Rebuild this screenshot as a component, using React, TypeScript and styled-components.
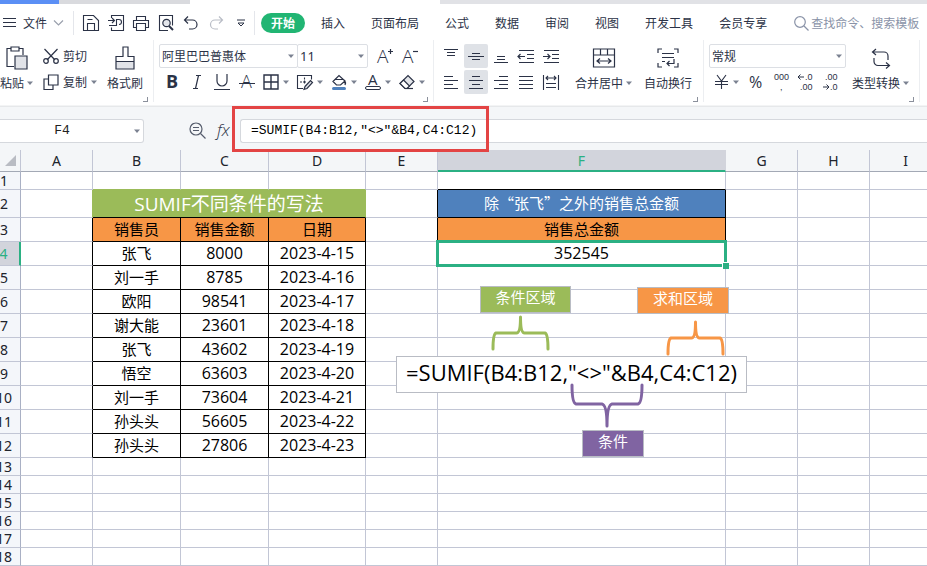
import React from 'react';
import styled, { createGlobalStyle, css } from 'styled-components';

const UI = '"Noto Sans CJK SC", "Noto Sans", sans-serif';
const CELL = '"Open Sans", "Noto Sans CJK SC", sans-serif';
const INK = '#2b3246';
const GREEN = '#2bb083';
const LINE = '#c2c6d5';

const GlobalStyle = createGlobalStyle`
  * { box-sizing: border-box; }
  body { margin: 0; background: #fff; overflow: hidden; }
  button, input, select { font: inherit; color: inherit; margin: 0; }
`;

const Page = styled.div`
  font-family: ${UI};
  font-size: 12px;
  line-height: 18px;
  color: ${INK};
  background: #fff;
  overflow: hidden;
`;

/* ---------- window tabs ---------- */
const TabStrip = styled.div`
  display: flex;
  height: 4px;
`;
const WindowTab = styled.div<{ $tone: string; $width?: number }>`
  background: ${p => p.$tone};
  ${p => (p.$width ? css`flex: 0 0 ${p.$width}px;` : css`flex: 1;`)}
`;

/* ---------- menu bar ---------- */
const MenuBar = styled.header`
  display: flex;
  align-items: center;
  height: 36px;
  padding-top: 2px;
  white-space: nowrap;
`;
const PlainButton = styled.button`
  display: inline-flex;
  align-items: center;
  justify-content: center;
  flex: none;
  padding: 0;
  border: 0;
  background: none;
  white-space: nowrap;
`;
const FileButton = styled(PlainButton)`
  gap: 7px;
  width: 73px;
  padding-left: 3px;
  justify-content: flex-start;
`;
const MenuDivider = styled.span`
  flex: none;
  width: 1px;
  height: 24px;
  background: #e4e6eb;
`;
const QuickTools = styled.div`
  display: flex;
  padding: 0 1px 0 4px;
`;
const QuickButton = styled(PlainButton)`
  width: 25px;
  height: 24px;
`;
const TabList = styled.nav`
  display: flex;
  align-items: center;
  padding-left: 4px;
`;
const MenuTab = styled(PlainButton)<{ $active?: boolean }>`
  height: 20px;
  padding: 0 13px;
  ${p => p.$active && css`
    margin: 0 3px 0 2px;
    padding: 0 10px;
    border-radius: 10px;
    background: #21b573;
    color: #fff;
    font-weight: 700;
  `}
`;
const Search = styled.label`
  display: flex;
  align-items: center;
  gap: 2px;
  flex: 1;
  min-width: 0;
  padding-left: 14px;
  color: #8a93a8;
`;
const SearchInput = styled.input`
  flex: 1;
  min-width: 0;
  padding: 0;
  border: 0;
  outline: 0;
  background: none;
  &::placeholder { color: #8a93a8; opacity: 1; }
`;

/* ---------- ribbon ---------- */
const Ribbon = styled.section`
  display: flex;
  height: 66px;
  border-bottom: 1px solid #f3f4f5;
`;
const Group = styled.div<{ $gap: number; $pad: string }>`
  position: relative;
  display: flex;
  flex: none;
  gap: ${p => p.$gap}px;
  padding: ${p => p.$pad};
  height: 62px;
  border-right: 1px solid #eceef1;
`;
const Corner = styled.span`
  position: absolute;
  right: 5px;
  bottom: 0;
  width: 5px;
  height: 5px;
  border: solid #8b909c;
  border-width: 0 1px 1px 0;
`;
const BigButton = styled(PlainButton)`
  flex-direction: column;
  height: 50px;
`;
const BigIcon = styled.span`
  display: flex;
  align-items: center;
  height: 28px;
`;
const Caption = styled.span`
  display: flex;
  align-items: center;
  gap: 3px;
  height: 22px;
`;
const Stack = styled.div`
  display: flex;
  flex-direction: column;
  gap: 2px;
`;
const Row = styled.div`
  display: flex;
  align-items: center;
  height: 24px;
`;
const SmallButton = styled(PlainButton)`
  justify-content: flex-start;
  gap: 4px;
  height: 24px;
`;
const ToolButton = styled(PlainButton)`
  width: 25px;
  height: 24px;
`;
const SplitButton = styled(PlainButton)`
  justify-content: flex-start;
  gap: 4px;
  width: 34px;
  height: 24px;
  padding-left: 4px;
`;
const AlignGrid = styled.div`
  display: grid;
  grid-template-columns: repeat(5, 24px);
  grid-auto-rows: 24px;
  align-content: start;
  gap: 2px 1px;
`;
const AlignButton = styled(PlainButton)<{ $on?: boolean }>`
  width: 24px;
  height: 24px;
  border-radius: 2px;
  background: ${p => (p.$on ? '#dfe2e7' : 'none')};
`;
const Combo = styled.span<{ $width: number }>`
  position: relative;
  display: flex;
  align-items: center;
  justify-content: flex-end;
  width: ${p => p.$width}px;
  height: 24px;
  padding-right: 3px;
  border: 1px solid #dcdfe4;
  border-radius: 2px;
  & + & { margin-left: -1px; }
`;
const ComboSelect = styled.select<{ $latin?: boolean }>`
  position: absolute;
  inset: 0;
  width: 100%;
  padding: 0 2px;
  border: 0;
  background: none;
  appearance: none;
  ${p => p.$latin && css`font: 13px "Noto Sans", sans-serif;`}
`;
const FontSizers = styled.span`
  display: flex;
  padding-left: 4px;
`;

/* ---------- formula bar ---------- */
const FormulaBar = styled.section`
  position: relative;
  display: flex;
  align-items: center;
  height: 44px;
  padding: 4px 0 0;
  background: #f4f6f8;
  border-top: 1px solid #e6e8ea;
`;
const NameBox = styled.span`
  display: flex;
  align-items: center;
  flex: none;
  width: 144px;
  height: 24px;
  padding-right: 3px;
  border: 1px solid #d5d8dd;
  border-left: 0;
  border-radius: 0 3px 3px 0;
  background: #fff;
`;
const NameInput = styled.input`
  flex: 1;
  min-width: 0;
  padding: 0 10px 0 0;
  border: 0;
  outline: 0;
  background: none;
  text-align: center;
  font: 13px "Liberation Mono", monospace;
  color: #222;
`;
const FormulaTools = styled.div`
  display: flex;
  align-items: center;
  gap: 10px;
  width: 96px;
  padding-left: 45px;
`;
const FormulaInput = styled.input`
  flex: 1;
  min-width: 0;
  height: 24px;
  padding: 0 10px;
  border: 1px solid #d5d8dd;
  border-right: 0;
  border-radius: 3px 0 0 3px;
  outline: 0;
  background: #fff;
  font: 13px "Liberation Mono", monospace;
  color: #000;
`;
const Highlight = styled.span`
  position: absolute;
  z-index: 3;
  left: 232px;
  top: -1px;
  width: 257px;
  height: 46px;
  border: 3px solid #e34444;
  pointer-events: none;
`;

/* ---------- sheet ---------- */
const Sheet = styled.main`
  position: relative;
`;
const Grid = styled.table`
  table-layout: fixed;
  width: 954px;
  margin-left: -12px;
  border-collapse: separate;
  border-spacing: 0;
  font-family: ${CELL};
  color: #000;
`;
const Col = styled.col<{ $width: number }>`
  width: ${p => p.$width}px;
`;
const Line = styled.tr<{ $height: number }>`
  height: ${p => p.$height}px;
`;
const ColHead = styled.th<{ $on?: boolean }>`
  padding: 0;
  border-right: 1px solid ${p => (p.$on ? '#d2d4dc' : LINE)};
  border-bottom: 1px solid #a3a9b5;
  background: #f4f6f8;
  font: 14px/20px "Noto Sans", sans-serif;
  color: #20232c;
  ${p => p.$on && css`
    border-bottom: 2px solid ${GREEN};
    background: #d2d4dc;
    color: ${GREEN};
    line-height: 19px;
  `}
`;
const SelectAll = styled(ColHead)`
  padding-left: 17px;
  text-align: left;
  line-height: 0;
`;
const RowHead = styled.th<{ $on?: boolean }>`
  padding: 0;
  border-right: 1px solid #a9b0c4;
  border-bottom: 1px solid ${LINE};
  background: #f4f6fa;
  font: 14px/16px "Noto Sans", sans-serif;
  color: #20232c;
  ${p => p.$on && css`
    border-right: 2px solid ${GREEN};
    background: #d2d4dc;
    color: ${GREEN};
  `}
`;
type Tone = 'plain' | 'title' | 'head' | 'blue' | 'data';
const tones = {
  plain: css``,
  title: css`
    background: #9bbb59;
    border-color: #9bbb59;
    border-bottom-color: #000;
    color: #fff;
    font-size: 19px;
  `,
  head: css`padding-bottom: 2px; background: #f79646; border-color: #000;`,
  blue: css`
    padding-bottom: 2px;
    background: #4f81bd;
    border-color: #000;
    color: #fff;
    font-family: "Noto Sans CJK SC", sans-serif;
  `,
  data: css`padding-bottom: 2px; border-color: #000;`,
};
const Cell = styled.td<{ $tone: Tone; $number?: boolean; $right?: string; $bottom?: string }>`
  position: relative;
  padding: 0;
  border: solid ${LINE};
  border-width: 0 1px 1px 0;
  font-size: ${p => (p.$number ? 16 : 15)}px;
  line-height: 16px;
  text-align: center;
  white-space: nowrap;
  ${p => tones[p.$tone]}
  ${p => p.$number && css`padding-bottom: 2px;`}
  ${p => p.$right && css`border-right-color: ${p.$right};`}
  ${p => p.$bottom && css`border-bottom-color: ${p.$bottom};`}
`;
const Selection = styled.span`
  position: absolute;
  z-index: 1;
  inset: -2px;
  border: 3px solid ${GREEN};
  &::after {
    content: '';
    position: absolute;
    right: -5px;
    bottom: -5px;
    width: 6px;
    height: 6px;
    border: solid #fff;
    border-width: 1px 0 0 1px;
    background: ${GREEN};
  }
`;

/* ---------- annotation shapes floating over the sheet ---------- */
const Note = styled.div<{ $x: number; $y: number; $w: number; $tone: string }>`
  position: absolute;
  left: ${p => p.$x}px;
  top: ${p => p.$y}px;
  width: ${p => p.$w}px;
  height: 27px;
  border: 1px solid #b9bcc4;
  background: ${p => p.$tone};
  color: #fff;
  font-size: 15px;
  line-height: 19px;
  text-align: center;
`;
const FormulaNote = styled.div`
  position: absolute;
  left: 396px;
  top: 206px;
  width: 351px;
  height: 37px;
  border: 1px solid #b9bcc4;
  background: #fff;
  font: 22px/30px ${CELL};
  color: #000;
  text-align: center;
  white-space: nowrap;
`;
const BraceSvg = styled.svg<{ $x: number; $y: number }>`
  position: absolute;
  left: ${p => p.$x}px;
  top: ${p => p.$y}px;
  fill: none;
  stroke-width: 3;
  stroke-linecap: round;
  stroke-linejoin: round;
`;

/* ---------- icons ---------- */
const Svg = styled.svg`
  flex: none;
  display: block;
  overflow: visible;
  fill: none;
  stroke: currentColor;
  stroke-width: 1.2;
  & text { fill: currentColor; stroke: none; font-family: "Open Sans", sans-serif; }
`;
const Digits = styled.g`
  && text { font: 9px "Liberation Sans", sans-serif; }
`;
const Icon = ({ w = 16, h = 16, children }: { w?: number; h?: number; children: React.ReactNode }) => (
  <Svg width={w} height={h} viewBox={`0 0 ${w} ${h}`} aria-hidden="true">{children}</Svg>
);
const Caret = () => (
  <Icon w={6} h={4}><path d="M0 0.5h6L3 4z" fill="#7b8291" stroke="none" /></Icon>
);

const quick: [string, React.ReactNode][] = [
  ['保存', <Icon><path d="M.500 15.500V.500h10l5 5v10zM4.500 15.500V8.500h7v7M4.500 4.500h5" strokeWidth="1.100" /></Icon>],
  ['输出', <Icon><path d="M3.500 3V.500h12v15h-12v-3M0 5.500h6M4 3l2.500 2.500L4 8M1 10.500h7.500V4.500h2.500a2.500 2.500 0 0 1 0 5" strokeWidth="1.100" /></Icon>],
  ['打印', <Icon><path d="M3.500 5V1.500h9V5M3.500 12.500H.500V5.500h15v7h-3M3.500 8.500h9v7h-9z" strokeWidth="1.100" /></Icon>],
  ['预览', <Icon><path d="M10 15.500H1.500V.500h13v10" strokeWidth="1.100" /><circle cx="8.500" cy="8" r="3.700" fill="#e3e5ea" /><path d="M11 11l4 4" strokeWidth="2" /></Icon>],
  ['撤销', <Icon><path d="M5 1.500L1.500 5L5 8.500M1.500 5h8a4.500 4.500 0 0 1 0 9H6" /></Icon>],
];

const lines = (rows: [number, number, number][], extra?: React.ReactNode) => (
  <Icon><path d={rows.map(([y, a, b]) => `M${a} ${y}H${b}`).join('')} strokeWidth="1.100" />{extra}</Icon>
);
const aligns: [string, boolean, React.ReactNode][] = [
  ['顶端对齐', false, lines([[1.5, 1, 15], [4.5, 4, 12], [7.5, 4, 12]])],
  ['垂直居中', true, lines([[5.5, 4, 12], [8.5, 0, 16], [11.5, 4, 12]])],
  ['底端对齐', false, lines([[8.5, 4, 12], [11.5, 4, 12], [14.5, 1, 15]])],
  ['减少缩进', false, lines([[2.5, 1, 16], [6.5, 9, 16], [10.5, 9, 16], [14.5, 1, 16]], <path d="M0 8.500h7M2.500 6L0 8.500L2.500 11" />)],
  ['增加缩进', false, lines([[2.5, 1, 16], [6.5, 9, 16], [10.5, 9, 16], [14.5, 1, 16]], <path d="M0 8.500h7M4.500 6L7 8.500L4.500 11" />)],
  ['左对齐', false, lines([[2.5, 1, 10], [6.5, 1, 15], [10.5, 1, 10], [14.5, 1, 15]])],
  ['水平居中', true, lines([[2.5, 4, 12], [6.5, 1, 15], [10.5, 4, 12], [14.5, 1, 15]])],
  ['右对齐', false, lines([[2.5, 6, 15], [6.5, 1, 15], [10.5, 6, 15], [14.5, 1, 15]])],
  ['两端对齐', false, lines([[2.5, 1, 15], [6.5, 1, 15], [10.5, 1, 15], [14.5, 1, 15]])],
  ['分散对齐', false, lines([[9.5, 3, 13], [13.5, 3, 13]], <path d="M.500 1v15M15.500 1v15M3 4h10M5 2l-2 2l2 2M11 2l2 2l-2 2" strokeWidth="1.100" />)],
];

const splits: [string, React.ReactNode][] = [
  ['边框', <Icon><path d="M1 1h14v14H1zM8 1v14M1 8h14" strokeWidth="1.400" /></Icon>],
  ['绘图边框', <Icon><path d="M6 14.500H.500V1.500h14v4M3 8h2M6 8h3M7.500 3.500v2M7.500 6.500v3" strokeWidth="1.100" /><path d="M8 12.500l5.500-6l2 2l-5.500 6l-3 .800z" fill="#dfe2e7" /></Icon>],
  ['填充颜色', <Icon><path d="M2 7.500L8 1.500L14 7L9.500 11H5.500zM4 5.500h8.500M13.500 6c1 1.500 1.500 3 .500 5" /><rect x="1" y="13" width="14" height="3" rx="1.500" fill="#4f81bd" stroke="none" /></Icon>],
  ['字体颜色', <Icon><text x="3" y="11" fontSize="15">A</text><rect x=".500" y="12.500" width="15" height="3" rx="1.500" strokeWidth="1" /></Icon>],
  ['清除', <Icon><path d="M1 9.500L9 1.500l6 6l-7 7H6z" fill="#e3e5ea" /><path d="M4.500 6L10.500 12l-2.500 2.500H6L1 9.500z" fill="#fff" /><path d="M6 14.500h8" /></Icon>],
];

const brace = (w: number) => {
  const m = w / 2;
  return `M2 34Q2 19 5 18H${m - 4}Q${m} 18 ${m} 2Q${m} 18 ${m + 4} 18H${w - 5}Q${w - 2} 19 ${w - 2} 34`;
};

/* ---------- data ---------- */
const columns = ['A', 'B', 'C', 'D', 'E', 'F', 'G', 'H', 'I'];
const widths = [33, 72, 88, 88, 97, 72, 288, 72, 72, 72];
const sales = [
  ['张飞', '8000', '2023-4-15'],
  ['刘一手', '8785', '2023-4-16'],
  ['欧阳', '98541', '2023-4-17'],
  ['谢大能', '23601', '2023-4-18'],
  ['张飞', '43602', '2023-4-19'],
  ['悟空', '63603', '2023-4-20'],
  ['刘一手', '73604', '2023-4-21'],
  ['孙头头', '56605', '2023-4-22'],
  ['孙头头', '27806', '2023-4-23'],
];
const tail = [13, 14, 15, 16, 17, 18];
const blanks = (n: number) => Array.from({ length: n }, (_, i) => <Cell key={`b${i}`} $tone="plain" />);

const Top = () => (
  <>
    <TabStrip>
      <WindowTab $tone="#5b8ff5" $width={59} />
      <WindowTab $tone="#d9dade" $width={131} />
      <WindowTab $tone="#ffffff" $width={250} />
      <WindowTab $tone="#e1e2e6" />
    </TabStrip>
    <MenuBar>
      <FileButton>
        <Icon w={13} h={12}><path d="M0 1.500h13M0 5.500h13M0 9.500h13" /></Icon>
        文件
        <Icon w={9} h={6}><path d="M0 .500L4.500 5L9 .500" stroke="#9aa0ad" /></Icon>
      </FileButton>
      <MenuDivider />
      <QuickTools>
        {quick.map(([name, icon]) => <QuickButton key={name} aria-label={name}>{icon}</QuickButton>)}
        <QuickButton aria-label="恢复">
          <Icon><path d="M11 1.500L14.500 5L11 8.500M14.500 5H7a4.500 4.500 0 0 0 0 9h3" stroke="#b9bdc6" /></Icon>
        </QuickButton>
        <QuickButton aria-label="自定义">
          <Icon w={8} h={8}><path d="M0 1h8M1 4h6L4 7z" strokeWidth="1" /></Icon>
        </QuickButton>
      </QuickTools>
      <MenuDivider />
      <TabList>
        <MenuTab $active>开始</MenuTab>
        {['插入', '页面布局', '公式', '数据', '审阅', '视图', '开发工具', '会员专享'].map(t => (
          <MenuTab key={t}>{t}</MenuTab>
        ))}
      </TabList>
      <Search>
        <Icon w={15} h={15}><circle cx="6" cy="6" r="5.300" /><path d="M10 10l4.500 4.500" /></Icon>
        <SearchInput aria-label="查找命令" placeholder="查找命令、搜索模板" />
      </Search>
    </MenuBar>
  </>
);

const RibbonBar = () => (
  <Ribbon>
    <Group $gap={10} $pad="4px 10px 0 0">
      <BigButton>
        <BigIcon>
          <Icon w={22} h={24}>
            <path d="M8 20.500H1V2.500h4M13 2.500h4V9M5 1h8v4H5z" />
            <path d="M9 10h12v13H9z" fill="#e1e3e8" />
          </Icon>
        </BigIcon>
        <Caption>粘贴<Caret /></Caption>
      </BigButton>
      <Stack>
        <SmallButton>
          <Icon><path d="M1.500 1L12 12M14.500 1L4 12" /><circle cx="3" cy="13" r="2.300" /><circle cx="13" cy="13" r="2.300" /></Icon>
          剪切
        </SmallButton>
        <SmallButton>
          <Icon><path d="M5.500 1h9.500v10H5.500zM5.500 5H1v10.500h9V11" /></Icon>
          复制<Caret />
        </SmallButton>
      </Stack>
      <BigButton>
        <BigIcon>
          <Icon w={20} h={24}>
            <path d="M1 16h18v7H1z" fill="#e1e3e8" stroke="none" />
            <path d="M8 1h5v9.500h6V23H1V10.500h7zM1 15.500h18" />
          </Icon>
        </BigIcon>
        <Caption>格式刷</Caption>
      </BigButton>
      <Corner />
    </Group>

    <Group $gap={0} $pad="4px 4px 0 5px">
      <Stack>
        <Row>
          <Combo $width={139}>
            <ComboSelect aria-label="字体"><option>阿里巴巴普惠体</option></ComboSelect>
            <Caret />
          </Combo>
          <Combo $width={71}>
            <ComboSelect aria-label="字号" $latin><option>11</option></ComboSelect>
            <Caret />
          </Combo>
          <FontSizers>
            <ToolButton aria-label="增大字号"><Icon><text x="0" y="15" fontSize="19" fontWeight="300">A</text><path d="M11 3.500h5M13.500 1v5" /></Icon></ToolButton>
            <ToolButton aria-label="减小字号"><Icon><text x="0" y="15" fontSize="19" fontWeight="300">A</text><path d="M11 3.500h5" /></Icon></ToolButton>
          </FontSizers>
        </Row>
        <Row>
          <ToolButton aria-label="加粗"><Icon><text x="2" y="14" fontSize="18" fontWeight="700">B</text></Icon></ToolButton>
          <ToolButton aria-label="倾斜"><Icon><path d="M7 1.500h5M4 14.500h5M9.500 1.500L6.500 14.500" /></Icon></ToolButton>
          <ToolButton aria-label="下划线"><Icon><path d="M3 0v7a5 5 0 0 0 10 0V0M0 15.500h16" /></Icon></ToolButton>
          <ToolButton aria-label="删除线"><Icon><text x="2" y="14" fontSize="18" fontWeight="300">A</text><path d="M0 9.500h16" strokeWidth="1" /></Icon></ToolButton>
          {splits.map(([name, icon]) => (
            <SplitButton key={name} aria-label={name}>{icon}<Caret /></SplitButton>
          ))}
        </Row>
      </Stack>
      <Corner />
    </Group>

    <Group $gap={12} $pad="4px 11px 0 5px">
      <AlignGrid>
        {aligns.map(([name, on, icon]) => <AlignButton key={name} $on={on} aria-label={name}>{icon}</AlignButton>)}
      </AlignGrid>
      <BigButton>
        <BigIcon>
          <Icon w={22} h={20}><path d="M.500 1h21v18H.500zM.500 7h21M7.500 1v6M14.500 1v6M4 13h14M7 10.500L4 13l3 2.500M15 10.500L18 13l-3 2.500" /></Icon>
        </BigIcon>
        <Caption>合并居中<Caret /></Caption>
      </BigButton>
      <BigButton>
        <BigIcon>
          <Icon w={22} h={20}><path d="M5 1H1v4M17 1h4v4M5 19H1v-4M17 19h4v-4M5 5.500h12M5 9.500h12M5 13.500h3M17 11v4.500h-7M12.500 13L10 15.500l2.500 2.500" /></Icon>
        </BigIcon>
        <Caption>自动换行</Caption>
      </BigButton>
      <Corner />
    </Group>

    <Group $gap={6} $pad="4px 10px 0 5px">
      <Stack>
        <Row>
          <Combo $width={137}>
            <ComboSelect aria-label="数字格式"><option>常规</option></ComboSelect>
            <Caret />
          </Combo>
        </Row>
        <Row>
          <SplitButton aria-label="货币">
            <Icon><path d="M4 1l4.500 6L13 1M2 7.500h13M2 10.500h13M8.500 7v8" strokeWidth="1.100" /></Icon><Caret />
          </SplitButton>
          <ToolButton aria-label="百分比"><Icon><text x="1" y="14" fontSize="16">%</text></Icon></ToolButton>
          <ToolButton aria-label="千位分隔"><Icon w={18} h={18}><Digits><text x="2" y="7">000</text><text x="8" y="17">,</text></Digits></Icon></ToolButton>
          <ToolButton aria-label="增加小数位"><Icon w={18} h={18}><Digits><text x="8" y="7">.0</text><text x="3" y="17">.00</text></Digits><path d="M1 4h6M3.500 1.500L1 4L3.500 6.500" strokeWidth="1" /></Icon></ToolButton>
          <ToolButton aria-label="减少小数位"><Icon w={18} h={18}><Digits><text x="3" y="7">.00</text><text x="8" y="17">.0</text></Digits><path d="M1 14h6M4.500 11.500L7 14L4.500 16.500" strokeWidth="1" /></Icon></ToolButton>
        </Row>
      </Stack>
      <BigButton>
        <BigIcon>
          <Icon w={20} h={20}><path d="M5 1L1.500 4L5 7M1.500 4H13a4 4 0 0 1 4 4v4M15 14.500L18.500 17.500L15 20.500M18.500 17.500H7a4 4 0 0 1-4-4V10" /></Icon>
        </BigIcon>
        <Caption>类型转换<Caret /></Caption>
      </BigButton>
      <Corner />
    </Group>
  </Ribbon>
);

const Formula = () => (
  <FormulaBar>
    <NameBox>
      <NameInput aria-label="名称框" defaultValue="F4" />
      <Caret />
    </NameBox>
    <FormulaTools>
      <PlainButton aria-label="缩放">
        <Icon w={17} h={17}><circle cx="7" cy="7" r="6" stroke="#555c6c" /><path d="M4 5.500h6M4 8.500h6M11.500 11.500l5 5" stroke="#555c6c" /></Icon>
      </PlainButton>
      <PlainButton aria-label="插入函数">
        <Svg width="16" height="18" viewBox="0 0 16 18" aria-hidden="true">
          <text x="1" y="14" fontSize="17" fontStyle="italic" fontWeight="300">fx</text>
        </Svg>
      </PlainButton>
    </FormulaTools>
    <FormulaInput aria-label="编辑栏" defaultValue={'=SUMIF(B4:B12,"<>"&B4,C4:C12)'} />
    <Highlight />
  </FormulaBar>
);

const Worksheet = () => (
  <Sheet>
    <Grid>
      <colgroup>{widths.map((w, i) => <Col key={i} $width={w} />)}</colgroup>
      <thead>
        <Line $height={22}>
          <SelectAll><Icon w={11} h={11}><path d="M11 0v11H0z" fill="#b9bcc3" stroke="none" /></Icon></SelectAll>
          {columns.map(c => <ColHead key={c} scope="col" $on={c === 'F'}>{c}</ColHead>)}
        </Line>
      </thead>
      <tbody>
        <Line $height={18}>
          <RowHead scope="row">1</RowHead>
          {blanks(1)}
          <Cell $tone="plain" $bottom="#9bbb59" />
          <Cell $tone="plain" $bottom="#9bbb59" />
          <Cell $tone="plain" $bottom="#9bbb59" />
          <Cell $tone="plain" />
          <Cell $tone="plain" $bottom="#000" />
          {blanks(3)}
        </Line>
        <Line $height={28}>
          <RowHead scope="row">2</RowHead>
          <Cell $tone="plain" $right="#9bbb59" />
          <Cell $tone="title" colSpan={3}>SUMIF不同条件的写法</Cell>
          <Cell $tone="plain" $right="#000" />
          <Cell $tone="blue">除“张飞”之外的销售总金额</Cell>
          {blanks(3)}
        </Line>
        <Line $height={24}>
          <RowHead scope="row">3</RowHead>
          <Cell $tone="plain" $right="#000" />
          <Cell $tone="head">销售员</Cell>
          <Cell $tone="head">销售金额</Cell>
          <Cell $tone="head">日期</Cell>
          <Cell $tone="plain" $right="#000" />
          <Cell $tone="head">销售总金额</Cell>
          {blanks(3)}
        </Line>
        {sales.map((row, i) => (
          <Line key={i} $height={24}>
            <RowHead scope="row" $on={i === 0}>{i + 4}</RowHead>
            <Cell $tone="plain" $right="#000" />
            {row.map((v, j) => <Cell key={j} $tone="data" $number={j > 0}>{v}</Cell>)}
            <Cell $tone="plain" />
            {i === 0 ? <Cell $tone="plain" $number>352545<Selection /></Cell> : <Cell $tone="plain" />}
            {blanks(3)}
          </Line>
        ))}
        {tail.map(n => (
          <Line key={n} $height={18}>
            <RowHead scope="row">{n}</RowHead>
            {blanks(9)}
          </Line>
        ))}
      </tbody>
    </Grid>
    <Note $x={480} $y={136} $w={91} $tone="#9bbb59">条件区域</Note>
    <Note $x={637} $y={137} $w={92} $tone="#f79646">求和区域</Note>
    <FormulaNote>=SUMIF(B4:B12,"&lt;&gt;"&amp;B4,C4:C12)</FormulaNote>
    <Note $x={582} $y={280} $w={62} $tone="#8064a2">条件</Note>
    <BraceSvg $x={491} $y={165} width="59" height="36" stroke="#9bbb59"><path d={brace(59)} /></BraceSvg>
    <BraceSvg $x={666} $y={170} width="59" height="36" stroke="#f79646"><path d={brace(59)} /></BraceSvg>
    <BraceSvg $x={570} $y={233} width="74" height="46" stroke="#8064a2">
      <path d="M2 2Q2 20 6 21H32Q37 22 37 43Q37 22 42 21H68Q72 20 72 2" />
    </BraceSvg>
  </Sheet>
);

export default function App() {
  return (
    <Page>
      <GlobalStyle />
      <Top />
      <RibbonBar />
      <Formula />
      <Worksheet />
    </Page>
  );
}
